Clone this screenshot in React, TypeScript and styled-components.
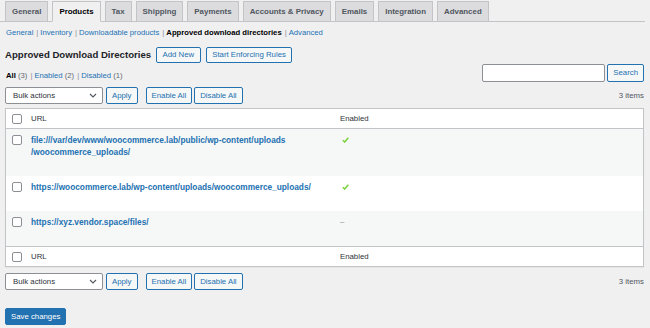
import React from "react";
import styled, { createGlobalStyle } from "styled-components";

const Global = createGlobalStyle`
  html, body { margin: 0; padding: 0; background: #f0f0f1; }
  body { font-family: "Liberation Sans", Arial, sans-serif; color: #3c434a; font-size: 7.8px; }
  * { box-sizing: border-box; }
`;

const Page = styled.div`
  width: 650px;
  height: 328px;
  overflow: hidden;
  padding: 0 6px 0 5px;
`;

const TabBar = styled.nav`
  display: flex;
  gap: 4px;
  margin: 0 -1px 0 -5px;
  padding: 1px 0 0 5px;
  border-bottom: 1px solid #c3c4c7;
`;

const Tab = styled.a<{ $active?: boolean }>`
  display: block;
  padding: 0 6px;
  line-height: 19px;
  font-size: 7.9px;
  font-weight: 700;
  white-space: nowrap;
  text-decoration: none;
  border: 1px solid #c3c4c7;
  margin-bottom: -1px;
  background: ${(p) => (p.$active ? "#f0f0f1" : "#dcdcde")};
  border-bottom-color: ${(p) => (p.$active ? "#f0f0f1" : "#c3c4c7")};
  color: ${(p) => (p.$active ? "#000" : "#50575e")};
`;

const LinkList = styled.ul<{ $top: number }>`
  list-style: none;
  display: flex;
  margin: ${(p) => p.$top}px 0 0 1px;
  padding: 0;
  font-size: 7.7px;
  line-height: 12px;
  height: 12px;
  color: #646970;
  white-space: nowrap;
`;

const LinkItem = styled.li``;

const NavLink = styled.a<{ $current?: boolean }>`
  text-decoration: none;
  color: ${(p) => (p.$current ? "#000" : "#2271b1")};
  font-weight: ${(p) => (p.$current ? 700 : 400)};
`;

const Sep = styled.span`
  color: #8c8f94;
  padding: 0 2px 0 3px;
`;

const Count = styled.span`
  color: #646970;
`;

const TitleRow = styled.div`
  display: flex;
  align-items: center;
  gap: 5px;
  margin-top: 8px;
  height: 16px;
`;

const Title = styled.h2`
  margin: 0;
  font-size: 9.6px;
  font-weight: 700;
  line-height: 16px;
  color: #1d2327;
  white-space: nowrap;
`;

const Button = styled.button<{ $h: number; $primary?: boolean; $pad?: number }>`
  height: ${(p) => p.$h}px;
  padding: 0 ${(p) => p.$pad ?? 5}px;
  font-family: inherit;
  font-size: 7.8px;
  line-height: 1;
  white-space: nowrap;
  border-radius: 2px;
  border: 1px solid #2271b1;
  background: ${(p) => (p.$primary ? "#2271b1" : "#f6f7f7")};
  color: ${(p) => (p.$primary ? "#fff" : "#2271b1")};
  cursor: pointer;
`;

const FilterRow = styled.div`
  display: flex;
  justify-content: space-between;
  align-items: flex-end;
  margin-top: 1px;
`;

const SearchBox = styled.div`
  display: flex;
  gap: 2px;
`;

const SearchInput = styled.input`
  width: 123px;
  height: 18px;
  border: 1px solid #8c8f94;
  border-radius: 2px;
  background: #fff;
  padding: 0 4px;
  font-size: 7.8px;
`;

const TableNav = styled.div<{ $top: number }>`
  display: flex;
  align-items: center;
  height: 17px;
  margin-top: ${(p) => p.$top}px;
`;

const SelectWrap = styled.div`
  position: relative;
  width: 98px;
  height: 17px;
  margin-right: 3px;
`;

const Select = styled.select`
  appearance: none;
  -webkit-appearance: none;
  width: 100%;
  height: 100%;
  border: 1px solid #8c8f94;
  border-radius: 2px;
  background: #fff;
  padding: 0 0 0 7px;
  font-family: inherit;
  font-size: 7.8px;
  color: #2c3338;
`;

const Chevron = styled.svg`
  position: absolute;
  right: 6px;
  top: 6px;
  pointer-events: none;
`;

const Spacer = styled.span<{ $w: number }>`
  display: inline-block;
  width: ${(p) => p.$w}px;
`;

const ItemCount = styled.span`
  margin-left: auto;
  color: #50575e;
  font-size: 7.8px;
`;

const Table = styled.div`
  margin-top: 4px;
  border: 1px solid #c3c4c7;
  background: #fff;
  box-shadow: 0 1px 1px rgba(0, 0, 0, 0.04);
`;

const Row = styled.div<{ $kind: "head" | "foot" | "odd" | "even" }>`
  display: grid;
  grid-template-columns: 19px 309px 1fr;
  background: ${(p) => (p.$kind === "odd" ? "#f6f7f7" : "#fff")};
  border-bottom: ${(p) => (p.$kind === "head" ? "1px solid #c3c4c7" : "none")};
  border-top: ${(p) => (p.$kind === "foot" ? "1px solid #c3c4c7" : "none")};
`;

const HeadCell = styled.div`
  padding: 4px 6px;
  height: 19px;
  line-height: 11px;
  font-size: 7.8px;
  color: #2c3338;
`;

const CheckCell = styled.div<{ $head?: boolean }>`
  padding: ${(p) => (p.$head ? "4.5px" : "6px")} 0 0 6px;
`;

const Cell = styled.div`
  padding: 5px 6px 18px;
  font-size: 8.3px;
  line-height: 12px;
`;

const Checkbox = styled.input.attrs({ type: "checkbox" })`
  appearance: none;
  -webkit-appearance: none;
  display: block;
  margin: 0;
  width: 10px;
  height: 10px;
  border: 1px solid #8c8f94;
  border-radius: 2px;
  background: #fff;
`;

const UrlLink = styled.a`
  display: block;
  font-weight: 700;
  color: #2271b1;
  text-decoration: none;
`;

const Status = styled.div`
  display: flex;
  align-items: center;
  height: 12px;
`;

const Check = styled.svg`
  display: block;
  margin-left: 2px;
`;

const Dash = styled.span`
  color: #8c8f94;
  font-size: 7.8px;
`;

const Footer = styled.div`
  margin-top: 18px;
`;

const tabs = ["General", "Products", "Tax", "Shipping", "Payments", "Accounts & Privacy", "Emails", "Integration", "Advanced"];
const sections = ["General", "Inventory", "Downloadable products", "Approved download directories", "Advanced"];

type Dir = { url: React.ReactNode; enabled: boolean };
const dirs: Dir[] = [
  {
    url: (
      <>
        file:///var/dev/www/woocommerce.lab/public/wp-content/uploads<wbr />/woocommerce_uploads/
      </>
    ),
    enabled: true,
  },
  { url: "https://woocommerce.lab/wp-content/uploads/woocommerce_uploads/", enabled: true },
  { url: "https://xyz.vendor.space/files/", enabled: false },
];

function Nav({ top }: { top: number }) {
  return (
    <TableNav $top={top}>
      <SelectWrap>
        <Select defaultValue="bulk">
          <option value="bulk">Bulk actions</option>
        </Select>
        <Chevron width="8" height="5" viewBox="0 0 8 5">
          <path d="M1 1 L4 4 L7 1" fill="none" stroke="#50575e" strokeWidth="1.1" />
        </Chevron>
      </SelectWrap>
      <Button $h={17}>Apply</Button>
      <Spacer $w={8} />
      <Button $h={17}>Enable All</Button>
      <Spacer $w={2} />
      <Button $h={17}>Disable All</Button>
      <ItemCount>3 items</ItemCount>
    </TableNav>
  );
}

function HeaderRow({ kind }: { kind: "head" | "foot" }) {
  return (
    <Row $kind={kind}>
      <CheckCell $head>
        <Checkbox />
      </CheckCell>
      <HeadCell>URL</HeadCell>
      <HeadCell>Enabled</HeadCell>
    </Row>
  );
}

export default function App() {
  return (
    <>
      <Global />
      <Page>
        <TabBar>
          {tabs.map((t) => (
            <Tab key={t} $active={t === "Products"} href="#">
              {t}
            </Tab>
          ))}
        </TabBar>

        <LinkList $top={5}>
          {sections.map((s, i) => (
            <LinkItem key={s}>
              <NavLink $current={s === "Approved download directories"} href="#">
                {s}
              </NavLink>
              {i < sections.length - 1 && <Sep>|</Sep>}
            </LinkItem>
          ))}
        </LinkList>

        <TitleRow>
          <Title>Approved Download Directories</Title>
          <Button $h={16} $pad={5.5}>Add New</Button>
          <Button $h={16} $pad={5.5}>Start Enforcing Rules</Button>
        </TitleRow>

        <FilterRow>
          <LinkList $top={0}>
            <LinkItem>
              <NavLink $current href="#">All</NavLink> <Count>(3)</Count>
              <Sep>|</Sep>
            </LinkItem>
            <LinkItem>
              <NavLink href="#">Enabled</NavLink> <Count>(2)</Count>
              <Sep>|</Sep>
            </LinkItem>
            <LinkItem>
              <NavLink href="#">Disabled</NavLink> <Count>(1)</Count>
            </LinkItem>
          </LinkList>
          <SearchBox>
            <SearchInput />
            <Button $h={18}>Search</Button>
          </SearchBox>
        </FilterRow>

        <Nav top={5} />

        <Table>
          <HeaderRow kind="head" />
          {dirs.map((d, i) => (
            <Row key={i} $kind={i % 2 === 0 ? "odd" : "even"}>
              <CheckCell>
                <Checkbox />
              </CheckCell>
              <Cell>
                <UrlLink href="#">{d.url}</UrlLink>
              </Cell>
              <Cell>
                <Status>
                  {d.enabled ? (
                    <Check width="7" height="6" viewBox="0 0 7 6">
                      <path d="M0.8 3.2 L2.7 5 L6.3 0.8" fill="none" stroke="#7ad03a" strokeWidth="1.5" />
                    </Check>
                  ) : (
                    <Dash>–</Dash>
                  )}
                </Status>
              </Cell>
            </Row>
          ))}
          <HeaderRow kind="foot" />
        </Table>

        <Nav top={6} />

        <Footer>
          <Button $h={17} $primary>Save changes</Button>
        </Footer>
      </Page>
    </>
  );
}
